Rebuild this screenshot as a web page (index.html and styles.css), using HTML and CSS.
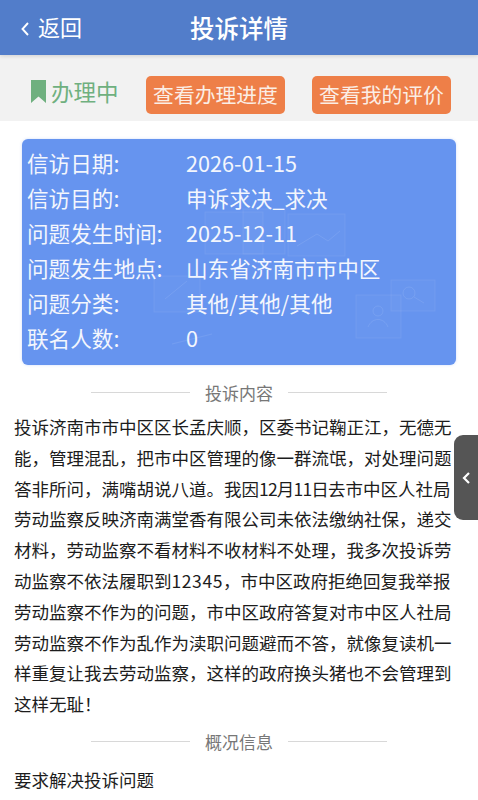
FILE: index.html
```html
<!DOCTYPE html>
<html lang="zh-CN">
  <head>
    <meta charset="UTF-8" />
    <meta name="viewport" content="width=device-width, initial-scale=1.0" />
    <title>投诉详情</title>
    <link rel="stylesheet" href="styles.css">
  </head>
  <body>
    <div class="header">
      <div class="back">
        <svg class="back-icon" width="10" height="16" viewBox="0 0 10 16"><path d="M8 2L2.5 8L8 14" fill="none" stroke="#fff" stroke-width="1.9"/></svg>
        <span class="back-text">返回</span>
      </div>
      <div class="title">投诉详情</div>
    </div>

    <div class="status-bar">
      <div class="status">
        <svg width="15" height="23" viewBox="0 0 15 23"><path d="M0 0H15V23L7.5 16.5L0 23Z" fill="#6fb07f"/></svg>
        <span>办理中</span>
      </div>
      <div class="btn btn-first">查看办理进度</div>
      <div class="btn">查看我的评价</div>
    </div>

    <div class="card">
      <svg class="card-bg" width="434" height="226" viewBox="0 0 434 226">
        <g fill="rgba(255,255,255,0.025)" stroke="rgba(255,255,255,0.07)">
          <rect x="183" y="73" width="58" height="42"/>
          <rect x="221" y="70" width="42" height="45"/>
          <rect x="266" y="75" width="57" height="42"/>
          <rect x="132" y="137" width="46" height="36"/>
          <rect x="334" y="156" width="45" height="43"/>
          <rect x="369" y="141" width="44" height="31"/>
        </g>
        <g fill="none" stroke="rgba(255,255,255,0.09)">
          <path d="M275 107L295 95L306 102L318 92"/>
          <path d="M143 160L165 142"/>
          <circle cx="356" cy="172" r="5"/>
          <path d="M346 188C350 178 362 178 366 188"/>
          <circle cx="387" cy="154" r="6"/>
          <path d="M392 158L402 164"/>
          <path d="M150 205L190 195"/>
        </g>
      </svg>
      <div class="row"><div class="label">信访日期:</div><div class="value">2026-01-15</div></div>
      <div class="row"><div class="label">信访目的:</div><div class="value">申诉求决_求决</div></div>
      <div class="row"><div class="label">问题发生时间:</div><div class="value">2025-12-11</div></div>
      <div class="row"><div class="label">问题发生地点:</div><div class="value">山东省济南市市中区</div></div>
      <div class="row"><div class="label">问题分类:</div><div class="value">其他/其他/其他</div></div>
      <div class="row"><div class="label">联名人数:</div><div class="value">0</div></div>
    </div>

    <div class="divider"><span>投诉内容</span></div>
    <p class="content">投诉济南市市中区区长孟庆顺，区委书记鞠正江，无德无<br>能，管理混乱，把市中区管理的像一群流氓，对处理问题<br>答非所问，满嘴胡说八道。我因<span class="date">12月11日</span>去市中区人社局<br>劳动监察反映济南满堂香有限公司未依法缴纳社保，递交<br>材料，劳动监察不看材料不收材料不处理，我多次投诉劳<br>动监察不依法履职到<span class="phone">12345</span>，市中区政府拒绝回复我举报<br>劳动监察不作为的问题，市中区政府答复对市中区人社局<br>劳动监察不作为乱作为渎职问题避而不答，就像复读机一<br>样重复让我去劳动监察，这样的政府换头猪也不会管理到<br>这样无耻！</p>

    <div class="divider divider-second"><span>概况信息</span></div>
    <p class="content summary">要求解决投诉问题</p>

    <div class="side-tab">
      <svg width="9" height="14" viewBox="0 0 9 14"><path d="M7 2L2 7L7 12" fill="none" stroke="#fff" stroke-width="2.2"/></svg>
    </div>
  </body>
</html>
```

FILE: styles.css
```css
html,
body {
  margin: 0;
  padding: 0;
  height: 800px;
  overflow: hidden;
  background-color: #fff;
  font-family: "Noto Sans CJK SC", "Noto Sans", sans-serif;
}
.header {
  position: relative;
  height: 55px;
  background-color: #527dca;
  color: #fff;
  display: flex;
  align-items: center;
  justify-content: center;
  box-shadow: 0 1px 4px rgba(0, 0, 0, 0.15);
}
.back {
  position: absolute;
  left: 20px;
  top: 0;
  height: 55px;
  display: flex;
  align-items: center;
  font-size: 22px;
}
.back-icon {
  margin-right: 8px;
  margin-top: 3px;
}
.back-text {
  margin-top: -3px;
}
.title {
  font-size: 24.5px;
  font-weight: 500;
}
.status-bar {
  height: 66px;
  box-sizing: border-box;
  padding: 21px 0 0 31px;
  background-color: #f2f2f2;
  display: flex;
  align-items: flex-start;
}
.status {
  width: 115px;
  height: 30px;
  display: flex;
  align-items: center;
  color: #6fb07f;
  font-size: 22.5px;
}
.status span {
  margin-left: 5px;
}
.btn {
  width: 139px;
  height: 38px;
  line-height: 37px;
  text-align: center;
  font-size: 20.8px;
  color: #fbeee5;
  background-color: #ee7f48;
  border-radius: 5px;
}
.btn-first {
  margin-right: 27px;
}
.card {
  position: relative;
  margin: 18px 22px 0;
  height: 226px;
  box-sizing: border-box;
  padding: 6px 5px;
  background-color: #6694ef;
  border-radius: 6px;
  box-shadow: 0 0 3px rgba(102, 148, 239, 0.3);
  color: #f3f6fd;
  font-size: 21.6px;
  overflow: hidden;
}
.card-bg {
  position: absolute;
  left: 0;
  top: 0;
}
.row {
  position: relative;
  display: flex;
  height: 35px;
  line-height: 35px;
}
.label {
  width: 159px;
}
.divider {
  display: flex;
  align-items: center;
  justify-content: center;
  margin-top: 15px;
  height: 24px;
  font-size: 17px;
  color: #777;
}
.divider span {
  margin: 0 15px;
}
.divider::before,
.divider::after {
  content: "";
  width: 99px;
  height: 1px;
  background-color: #d8d8d8;
}
.divider-second {
  margin-top: 10px;
}
.content {
  margin: 8px 14px 0;
  font-size: 17.5px;
  line-height: 30.8px;
  color: #1c1c1c;
  white-space: nowrap;
}
.date {
  letter-spacing: -0.8px;
}
.phone {
  letter-spacing: 0.6px;
}
.summary {
  margin-top: 11px;
}
.side-tab {
  position: absolute;
  right: 0;
  top: 435px;
  width: 24px;
  height: 85px;
  background-color: #555;
  border-radius: 9px 0 0 9px;
  display: flex;
  align-items: center;
  justify-content: center;
}
```
